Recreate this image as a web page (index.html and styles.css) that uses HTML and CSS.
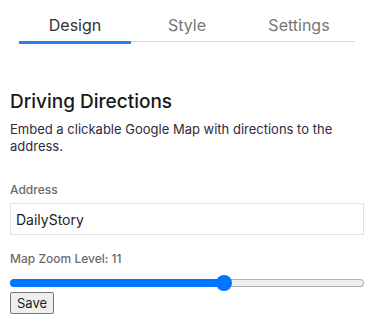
FILE: index.html
```html
<!DOCTYPE html>
<html lang="en">
<head>
    <meta charset="UTF-8">
    <meta name="viewport" content="width=device-width, initial-scale=1.0">
    <title>Driving Directions</title>
    <link rel="stylesheet" href="styles.css">
</head>
<body>

    <!-- Tabs -->
    <div class="tabs">
        <div class="tab active">Design</div>
        <div class="tab">Style</div>
        <div class="tab">Settings</div>
    </div>

    <!-- Block settings -->
    <div class="panel">
        <h3>Driving Directions</h3>
        <p class="desc">Embed a clickable Google Map with directions to the address.</p>

        <label for="address">Address</label>
        <input type="text" id="address" value="DailyStory">

        <label for="zoom" class="zoom-label">Map Zoom Level: <span id="zoomValue">11</span></label>
        <input type="range" id="zoom" min="0" max="18" value="11" style="--fill: 60.6%" oninput="updateZoom(this)">

        <button class="save">Save</button>
    </div>

    <script>
        function updateZoom(el) {
            document.getElementById('zoomValue').textContent = el.value;
            let w = el.offsetWidth;
            let center = 8 + (w - 16) * (el.value - el.min) / (el.max - el.min);
            el.style.setProperty('--fill', (center / w * 100) + '%');
        }
    </script>

</body>
</html>
```

FILE: styles.css
```css
* {
    font-family: 'Inter', 'Open Sans', sans-serif;
    box-sizing: border-box;
}
body {
    margin: 0;
    padding: 0 10px;
    background: white;
}
.tabs {
    display: flex;
    margin: 9px 9px 0;
    border-bottom: 1px solid #d8d8d8;
}
.tab {
    flex: 1;
    text-align: center;
    font-size: 16px;
    line-height: 19px;
    color: #777;
    padding: 7px 0 6px;
    border-bottom: 3px solid transparent;
    margin-bottom: -3px;
}
.tab.active {
    color: #333;
    border-bottom-color: #2b7de9;
}
.panel {
    padding-top: 48px;
}
h3 {
    margin: 0 0 7px;
    font-size: 19px;
    line-height: 24px;
    font-weight: 500;
    color: #1a1a1a;
}
.desc {
    margin: 0 0 28px;
    font-size: 13px;
    line-height: 16.5px;
    color: #33283d;
}
label {
    display: block;
    font-size: 12px;
    line-height: 15px;
    font-weight: 500;
    color: #6e6a6a;
    margin-bottom: 6px;
}
input[type=text] {
    display: block;
    width: 100%;
    height: 32px;
    padding: 1px 5px 0;
    border: 1px solid #e2e2e2;
    border-radius: 0;
    font-size: 14px;
    color: #222;
    margin-bottom: 16px;
}
.zoom-label {
    margin-bottom: 9px;
}
input[type=range] {
    -webkit-appearance: none;
    appearance: none;
    display: block;
    width: 100%;
    height: 16px;
    margin: 0 0 1px;
    background: transparent;
}
input[type=range]::-webkit-slider-runnable-track {
    height: 8px;
    border: 1px solid transparent;
    border-radius: 4px;
    background:
        linear-gradient(to right, #0075ff var(--fill), transparent var(--fill)),
        linear-gradient(#efefef, #efefef),
        linear-gradient(#b2b2b2, #b2b2b2);
    background-origin: border-box;
    background-clip: border-box, padding-box, border-box;
}
input[type=range]::-webkit-slider-thumb {
    -webkit-appearance: none;
    appearance: none;
    width: 16px;
    height: 16px;
    margin-top: -5px;
    border: none;
    border-radius: 50%;
    background: #0075ff;
}
.save {
    display: block;
    font-size: 13px;
    line-height: 16px;
    padding: 2px 6px;
    border: 1px solid #767676;
    border-radius: 2px;
    background: #efefef;
    color: #222;
}
```
